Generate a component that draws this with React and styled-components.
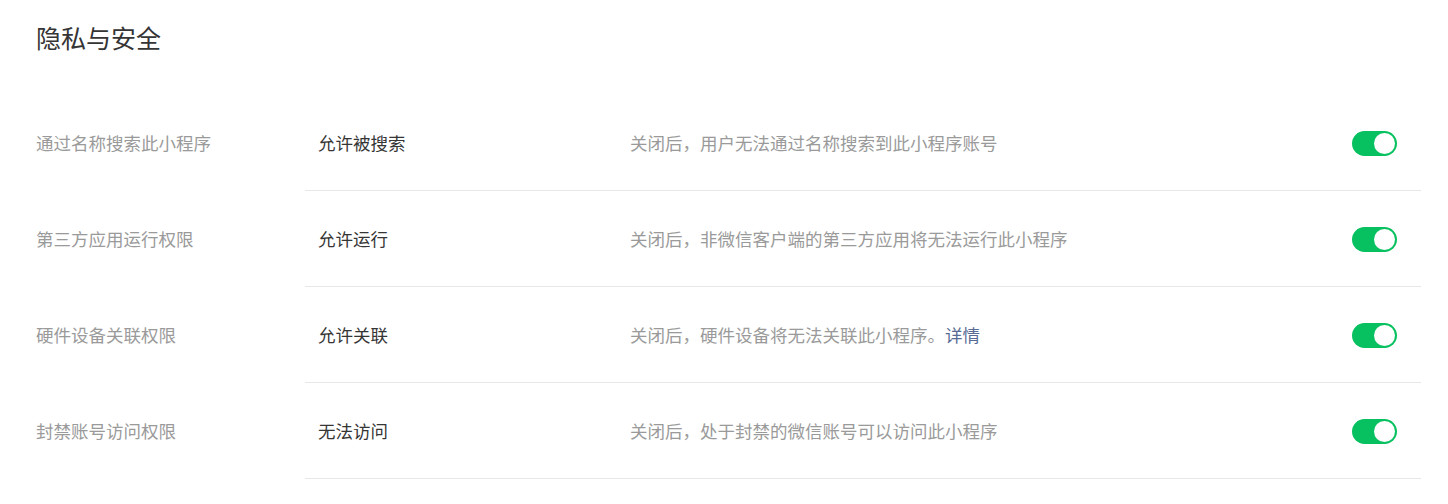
import styled, { createGlobalStyle } from 'styled-components';

const GlobalStyle = createGlobalStyle`
  body {
    margin: 0;
    background: #fff;
    font-family: "Noto Sans CJK SC", "Noto Sans", sans-serif;
  }
`;

const Page = styled.div`
  width: 1448px;
  padding: 0 27px 0 36px;
  box-sizing: border-box;
`;

const Title = styled.h2`
  margin: 0;
  height: 95px;
  padding-top: 22px;
  box-sizing: border-box;
  font-size: 25px;
  line-height: 30px;
  font-weight: 400;
  color: #353535;
`;

const Row = styled.div`
  display: grid;
  grid-template-columns: 269px 1fr;
`;

const Label = styled.div`
  height: 95px;
  display: flex;
  align-items: center;
  font-size: 17.5px;
  color: #9a9a9a;
`;

const Content = styled.div`
  height: 95px;
  display: grid;
  grid-template-columns: 312px 1fr auto;
  align-items: center;
  padding: 0 24px 0 13px;
  border-bottom: 1px solid #e7e7e7;
`;

const Value = styled.div`
  font-size: 17.5px;
  color: #353535;
`;

const Desc = styled.div`
  font-size: 17.5px;
  color: #9a9a9a;
  a {
    color: #576b95;
    text-decoration: none;
  }
`;

const Switch = styled.span`
  position: relative;
  display: block;
  margin-top: 2px;
  width: 45px;
  height: 25px;
  border-radius: 13px;
  background: ${(p) => (p.$on ? '#07c160' : '#e5e5e5')};
  &::after {
    content: '';
    position: absolute;
    top: 2px;
    left: ${(p) => (p.$on ? '22px' : '2px')};
    width: 21px;
    height: 21px;
    border-radius: 50%;
    background: #fff;
  }
`;

const rows = [
  {
    label: '通过名称搜索此小程序',
    value: '允许被搜索',
    desc: '关闭后，用户无法通过名称搜索到此小程序账号',
  },
  {
    label: '第三方应用运行权限',
    value: '允许运行',
    desc: '关闭后，非微信客户端的第三方应用将无法运行此小程序',
  },
  {
    label: '硬件设备关联权限',
    value: '允许关联',
    desc: '关闭后，硬件设备将无法关联此小程序。',
    link: '详情',
  },
  {
    label: '封禁账号访问权限',
    value: '无法访问',
    desc: '关闭后，处于封禁的微信账号可以访问此小程序',
  },
];

export default function App() {
  return (
    <Page>
      <GlobalStyle />
      <Title>隐私与安全</Title>
      {rows.map((r) => (
        <Row key={r.label}>
          <Label>{r.label}</Label>
          <Content>
            <Value>{r.value}</Value>
            <Desc>
              {r.desc}
              {r.link && <a href="#">{r.link}</a>}
            </Desc>
            <Switch $on />
          </Content>
        </Row>
      ))}
    </Page>
  );
}
